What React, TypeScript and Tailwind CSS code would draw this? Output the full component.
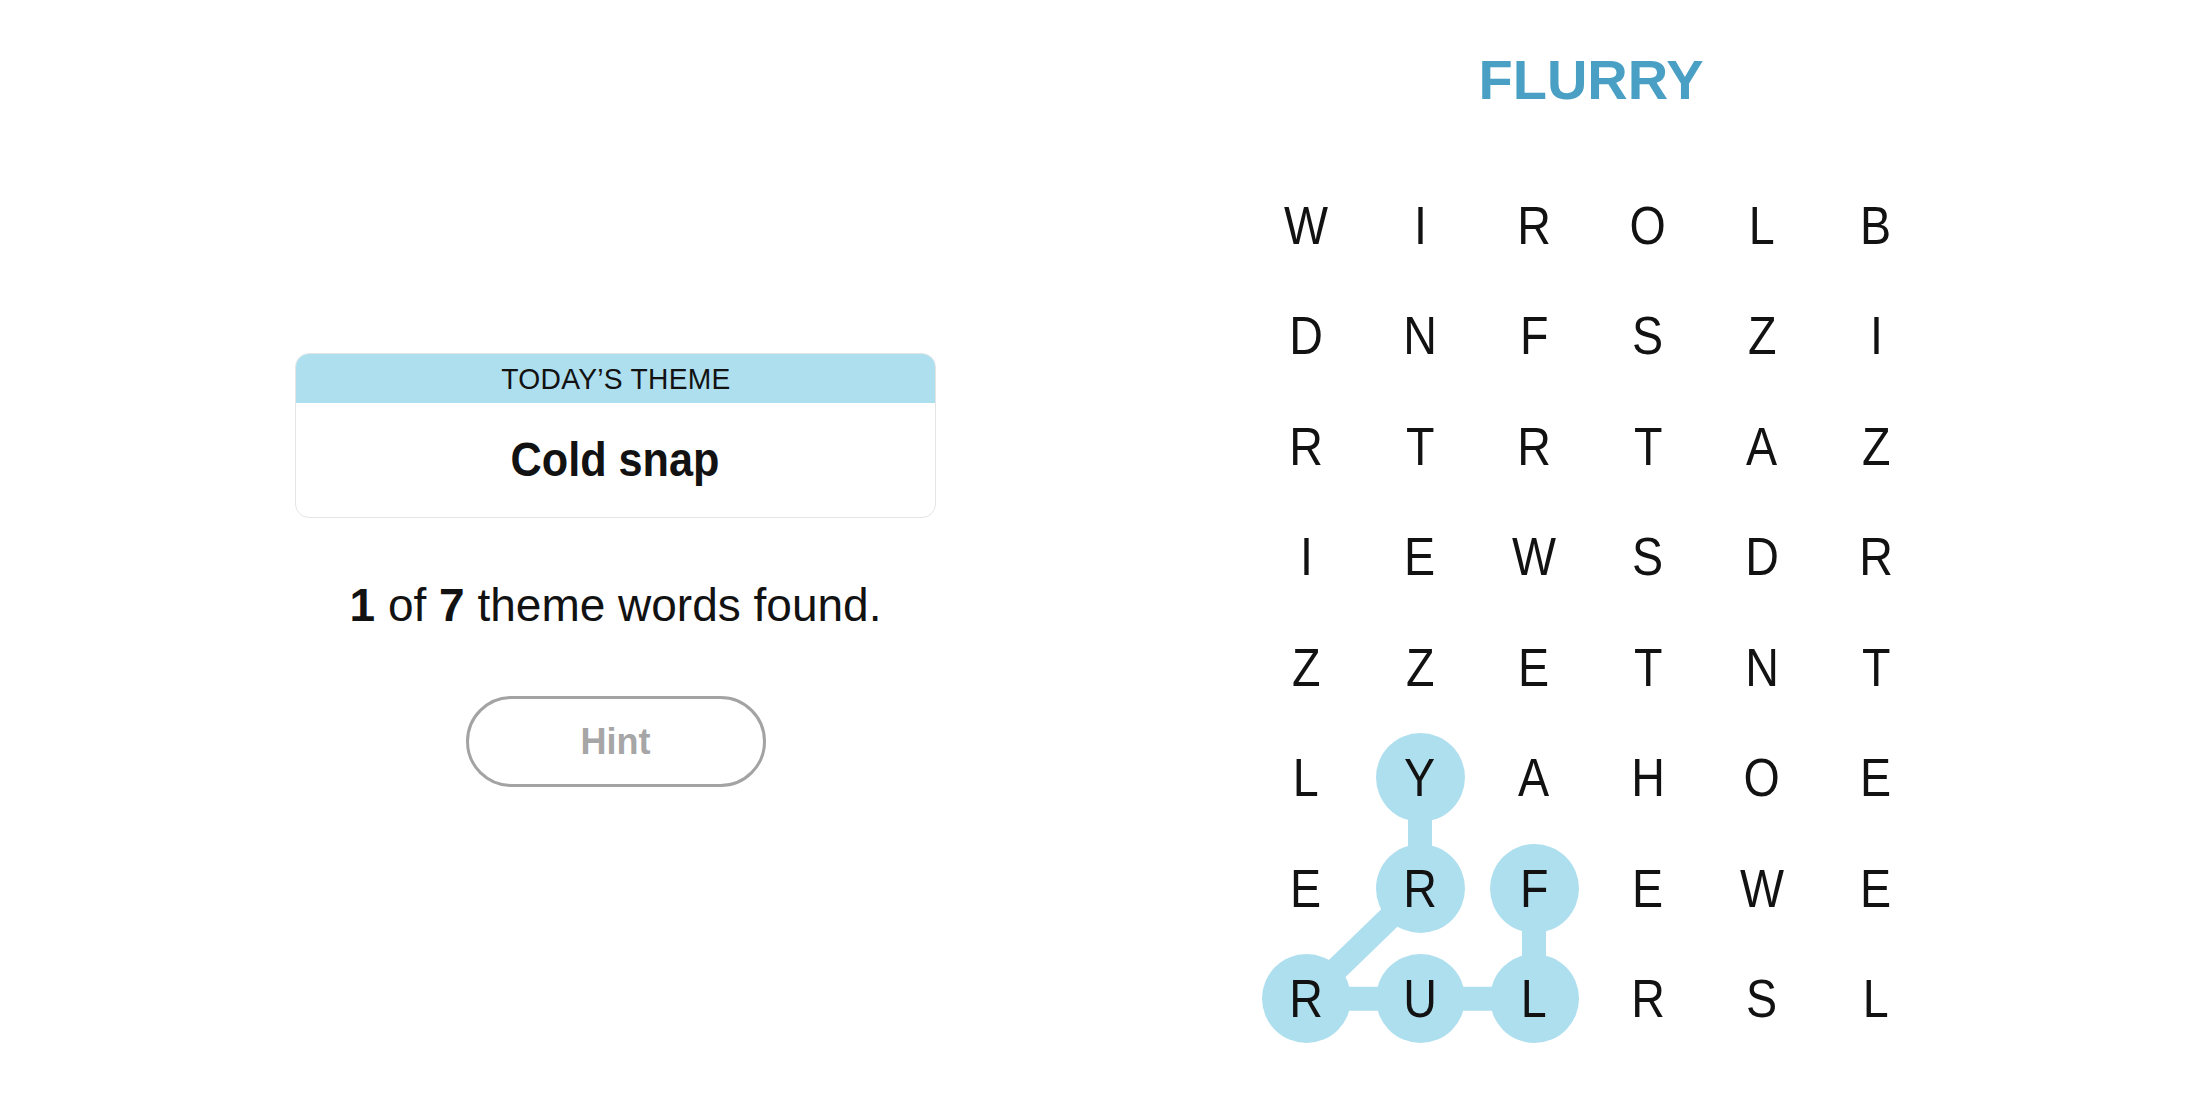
import React from "react";

const GRID = [
  "WIROLB",
  "DNFSZI",
  "RTRTAZ",
  "IEWSDR",
  "ZZETNT",
  "LYAHOE",
  "ERFEWE",
  "RULRSL",
];

// found word FLURRY, in order of the path
const PATH: [number, number][] = [
  [2, 6],
  [2, 7],
  [1, 7],
  [0, 7],
  [1, 6],
  [1, 5],
];

const CELL_W = 114;
const CELL_H = 110.5;

function isSelected(col: number, row: number) {
  return PATH.some(([c, r]) => c === col && r === row);
}

function ThemeCard() {
  return (
    <div className="flex h-[165px] w-[641px] flex-col overflow-hidden rounded-[14px] border border-[#e4e4e4]">
      <div className="flex h-[49px] items-center justify-center bg-[#aedfee] text-[#121212]">
        <span className="inline-block scale-x-[0.94] text-[30px] leading-none tracking-[0.3px]">TODAY’S THEME</span>
      </div>
      <div className="flex flex-1 items-center justify-center text-[#121212]">
        <span className="inline-block scale-x-[0.9] text-[48px] font-bold leading-none">Cold snap</span>
      </div>
    </div>
  );
}

function Board() {
  const points = PATH.map(([c, r]) => `${c * CELL_W + CELL_W / 2},${r * CELL_H + CELL_H / 2}`).join(" ");
  return (
    <div className="relative mt-[62px] w-[684px]">
      <svg
        className="absolute left-0 top-0"
        width={684}
        height={884}
        viewBox="0 0 684 884"
      >
        <polyline
          points={points}
          fill="none"
          stroke="#aedfee"
          strokeWidth={24}
          strokeLinejoin="round"
        />
      </svg>
      <div className="relative grid grid-cols-6">
        {GRID.map((line, row) =>
          line.split("").map((ch, col) => (
            <div key={`${row}-${col}`} className="flex h-[110.5px] items-center justify-center">
              <div
                className={`flex h-[89px] w-[89px] items-center justify-center rounded-full text-[#121212] ${
                  isSelected(col, row) ? "bg-[#aedfee]" : ""
                }`}
              >
                <span className="inline-block scale-x-[0.88] text-[53px] leading-none">{ch}</span>
              </div>
            </div>
          ))
        )}
      </div>
    </div>
  );
}

export default function App() {
  return (
    <div
      className="flex h-[1100px] w-[2200px] bg-white"
      style={{ fontFamily: "'Liberation Sans', Arial, sans-serif" }}
    >
      <div className="ml-[295px] flex w-[641px] flex-col items-center pt-[353px]">
        <ThemeCard />
        <p className="mt-[60px] text-[46px] leading-[55px] text-[#121212]">
          <span className="font-bold">1</span> of <span className="font-bold">7</span> theme words found.
        </p>
        <button
          type="button"
          className="mt-[63px] flex h-[91px] w-[300px] items-center justify-center rounded-full border-[3px] border-[#a3a3a3] text-[36px] font-bold text-[#a6a6a6]"
        >
          Hint
        </button>
      </div>

      <div className="ml-[313px] flex w-[684px] flex-col items-center pt-[52px]">
        <h1 className="text-[56px] font-bold leading-none text-[#4aa0c4]">FLURRY</h1>
        <Board />
      </div>
    </div>
  );
}
